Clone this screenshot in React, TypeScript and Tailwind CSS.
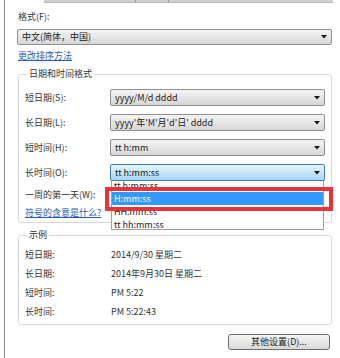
import { ReactNode } from "react";

const font = { fontFamily: '"Noto Sans CJK SC", "Noto Sans", sans-serif' };

function Arrow() {
  return (
    <svg width="6" height="4" viewBox="0 0 6 4" className="shrink-0">
      <path d="M0 0 L6 0 L3 3.5 Z" fill="#1a1a1a" />
    </svg>
  );
}

function Combo({ text, active = false, className = "" }: { text: string; active?: boolean; className?: string }) {
  return (
    <div
      className={`flex items-center justify-between pl-[4px] pr-[4px] rounded-[2px] border ${
        active
          ? "border-[#3c7fb1] bg-linear-to-b from-[#e8f5fd] via-[#c4e5f8] to-[#a6d7f3]"
          : "border-[#8e8f8f] bg-linear-to-b from-[#f4f4f4] via-[#e6e6e6] to-[#d6d6d6]"
      } ${className}`}
    >
      <span className="text-[9px] leading-[12px] text-[#222] whitespace-nowrap">{text}</span>
      <Arrow />
    </div>
  );
}

function Group({ title, children, className = "" }: { title: string; children: ReactNode; className?: string }) {
  return (
    <fieldset className={`border border-[#d5d9dc] rounded-[3px] pl-[6px] pr-[6px] ${className}`}>
      <legend className="ml-[2px] px-[2px] text-[9px] leading-[12px] text-[#333]">{title}</legend>
      {children}
    </fieldset>
  );
}

const formatRows = [
  { label: "短日期(S):", value: "yyyy/M/d dddd" },
  { label: "长日期(L):", value: "yyyy'年'M'月'd'日' dddd" },
  { label: "短时间(H):", value: "tt h:mm" },
  { label: "长时间(O):", value: "tt h:mm:ss", active: true },
];

const sampleRows = [
  { label: "短日期:", value: "2014/9/30 星期二" },
  { label: "长日期:", value: "2014年9月30日 星期二" },
  { label: "短时间:", value: "PM 5:22" },
  { label: "长时间:", value: "PM 5:22:43" },
];

const options = ["tt h:mm:ss", "H:mm:ss", "HH:mm:ss", "tt hh:mm:ss"];

export default function App() {
  return (
    <div className="relative w-[340px] h-[358px] overflow-hidden bg-white pl-[4px]" style={font}>
      <div className="h-full border-l border-[#8c8c8c] pl-[13px] pr-[8px]">
        {/* tab strip remnant */}
        <div className="ml-[26px] flex h-[3px] w-[289px] bg-[#cfcfcf] border-b border-[#b5b5b5]">
          <div className="w-[91px]" />
          <div className="w-[33px] border-l border-[#9a9a9a]" />
          <div className="flex-1 border-l border-[#9a9a9a]" />
        </div>

        <div className="mt-[8px] text-[9px] leading-[12px] text-[#333]">格式(F):</div>
        <Combo text="中文(简体，中国)" className="mt-[6px] h-[16px] -ml-px w-[315px]" />
        <div className="mt-[5px] text-[9px] leading-[12px] text-[#1f5fb8] underline">更改排序方法</div>

        <Group title="日期和时间格式" className="mt-[6px] pb-[3px]">
          <div className="pt-[9px] flex flex-col gap-[8px]">
            {formatRows.map((r) => (
              <div key={r.label} className="flex items-center h-[17px]">
                <span className="w-[85px] text-[9px] leading-[12px] text-[#333]">{r.label}</span>
                <Combo text={r.value} active={r.active} className="flex-1 h-[17px]" />
              </div>
            ))}
          </div>
          <div className="mt-[8px] text-[9px] leading-[12px] text-[#333]">一周的第一天(W):</div>
          <div className="mt-[6px] text-[9px] leading-[12px] text-[#1f5fb8] underline">符号的含意是什么?</div>
        </Group>

        <Group title="示例" className="mt-[6px] pb-[6px]">
          <div className="pt-[8px] flex flex-col gap-[7px]">
            {sampleRows.map((r) => (
              <div key={r.label} className="flex h-[12px] text-[9px] leading-[12px] text-[#333]">
                <span className="w-[86px]">{r.label}</span>
                <span>{r.value}</span>
              </div>
            ))}
          </div>
        </Group>

        <div className="mt-[9px] flex justify-end pr-[2px]">
          <button className="h-[16px] w-[102px] rounded-[3px] border border-[#707070] bg-linear-to-b from-[#f4f4f4] via-[#e8e8e8] to-[#d8d8d8] text-[9px] leading-[12px] text-[#222]">
            其他设置(D)...
          </button>
        </div>
      </div>

      {/* open dropdown list */}
      <div className="absolute left-[111px] top-[181px] w-[213px] h-[49px] overflow-hidden border border-t-0 border-[#a0a0a0] bg-white">
        <div className="-mt-[2px]">
          {options.map((o, i) => (
            <div
              key={o}
              className={`h-[13px] pl-[2px] text-[9px] leading-[13px] ${
                i === 1 ? "bg-[#3399ff] text-white" : "text-[#222]"
              }`}
            >
              {o}
            </div>
          ))}
        </div>
      </div>

      {/* red highlight frame */}
      <div className="absolute left-[105px] top-[187px] w-[228px] h-[24px] border-[4px] border-[#e8333b]" />
    </div>
  );
}
